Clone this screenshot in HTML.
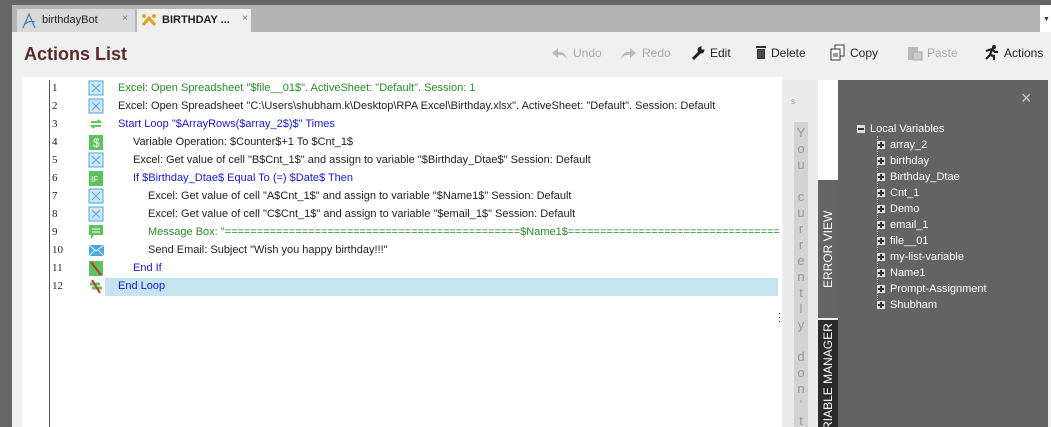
<!DOCTYPE html>
<html style="width:1051px;height:427px;overflow:hidden"><head><meta charset="utf-8"><style>
*{margin:0;padding:0;box-sizing:border-box}
body{width:1051px;height:427px;overflow:hidden;background:#666;font-family:"Liberation Sans",sans-serif;position:relative}
.abs{position:absolute}
.row{position:absolute;left:0;height:18px;font-size:11px;line-height:18px;width:780px}
.num{position:absolute;left:52px;font-family:"Liberation Serif",serif;font-size:11px;color:#222}
.ic{position:absolute;left:88px;top:1px;width:16px;height:16px}
.tx{position:absolute;white-space:nowrap;color:#222;letter-spacing:0}
.g{color:#2a8a2a}.b{color:#1a1acc}
.tb{position:absolute;top:46px;font-size:12px;color:#222;white-space:nowrap}
.tb.d{color:#aaa}
.tree{position:absolute;color:#fff;font-size:11px;white-space:nowrap}
.pl{display:inline-block;width:8px;height:8px;background:#ddd;margin-right:5px;vertical-align:-1px;position:relative}
.pl:after{content:"";position:absolute;left:1px;top:3px;width:6px;height:2px;background:#333}
.pl.p:before{content:"";position:absolute;left:3px;top:1px;width:2px;height:6px;background:#333}
</style></head><body>
<div class="abs" style="left:12px;top:5px;width:1039px;height:27px;background:#b4b4b4"></div>
<div class="abs" style="left:17px;top:9px;width:118px;height:23px;background:#d9d9d9"></div>
<svg class="abs" style="left:21px;top:12px" width="16" height="18"><path d="M2 16 L8 2 L14 16 M4 12 Q9 8 14 10" stroke="#4a7ab0" fill="none" stroke-width="1.2"/></svg>
<div class="abs" style="left:42px;top:14px;font-size:11px;color:#222">birthdayBot</div>
<div class="abs" style="left:122px;top:13px;font-size:10px;color:#777">×</div>
<div class="abs" style="left:137px;top:9px;width:114px;height:23px;background:#f0f0f0"></div>
<svg class="abs" style="left:141px;top:13px" width="16" height="14"><path d="M2 12 L8 5 L14 12" stroke="#e2a21c" stroke-width="3" fill="none"/><circle cx="3" cy="3" r="2" fill="#e2a21c"/><circle cx="13" cy="3" r="2" fill="#e2a21c"/></svg>
<div class="abs" style="left:162px;top:14px;font-size:11px;font-weight:bold;color:#222">BIRTHDAY ...</div>
<div class="abs" style="left:242px;top:13px;font-size:10px;color:#777">×</div>
<div class="abs" style="left:1040px;top:5px;width:11px;height:27px;background:#fff"></div>
<div class="abs" style="left:1043px;top:16px;font-size:7px;color:#333">▼</div>
<div class="abs" style="left:12px;top:32px;width:1039px;height:395px;background:#f0f0f0"></div>
<div class="abs" style="left:24px;top:44px;font-size:18px;font-weight:bold;color:#5b2b2b">Actions List</div>
<svg class="abs" style="left:551px;top:46px" width="17" height="14"><path d="M16 13 Q14 5 7 6 V2 L1 7 L7 12 V9 Q13 8 16 13Z" fill="#bbb"/></svg>
<div class="tb d" style="left:573px">Undo</div>
<svg class="abs" style="left:620px;top:46px" width="17" height="14"><path d="M1 13 Q3 5 10 6 V2 L16 7 L10 12 V9 Q4 8 1 13Z" fill="#bbb"/></svg>
<div class="tb d" style="left:642px">Redo</div>
<svg class="abs" style="left:690px;top:45px" width="16" height="16"><path d="M3 14 L10 7" stroke="#222" stroke-width="3"/><circle cx="11" cy="5" r="3.5" fill="#222"/><circle cx="13" cy="3" r="1.6" fill="#f0f0f0"/></svg>
<div class="tb" style="left:710px">Edit</div>
<svg class="abs" style="left:755px;top:45px" width="12" height="15"><rect x="1" y="1" width="10" height="2" fill="#333"/><rect x="2" y="4" width="8" height="10" fill="#333"/><path d="M4 5v8M6 5v8M8 5v8" stroke="#888" stroke-width=".6"/></svg>
<div class="tb" style="left:771px">Delete</div>
<svg class="abs" style="left:830px;top:44px" width="16" height="17"><rect x="5" y="1" width="9" height="11" fill="#fff" stroke="#333"/><rect x="1" y="5" width="9" height="11" fill="#fff" stroke="#333"/><path d="M3 10h5M3 12h5" stroke="#333"/></svg>
<div class="tb" style="left:850px">Copy</div>
<svg class="abs" style="left:907px;top:45px" width="16" height="16"><rect x="1" y="2" width="10" height="13" fill="#bbb"/><rect x="6" y="7" width="9" height="8" fill="#ccc" stroke="#aaa"/></svg>
<div class="tb d" style="left:927px">Paste</div>
<svg class="abs" style="left:983px;top:44px" width="16" height="17"><circle cx="11" cy="3" r="2" fill="#222"/><path d="M3 7 L9 5 L12 8 L15 8 M9 5 L7 11 L3 15 M7 11 L11 12 L11 16" stroke="#222" stroke-width="2.2" fill="none"/></svg>
<div class="tb" style="left:1004px">Actions</div>
<div class="abs" style="left:22px;top:77px;width:760px;height:350px;background:#fff"></div>
<div class="abs" style="left:49px;top:80px;width:1px;height:347px;background:#555"></div>
<div class="abs" style="left:105px;top:278px;width:673px;height:18px;background:#c6e4ed"></div>
<div class="row" style="top:79px"><span class="num">1</span><svg class="ic"><rect x="1" y="1" width="14" height="14" fill="#cfe8f7" stroke="#4aa7e0"/><path d="M4 4L12 12M12 4L4 12" stroke="#4aa7e0"/></svg><span class="tx g" style="left:118px">Excel: Open Spreadsheet "$file__01$". ActiveSheet: "Default". Session: 1</span></div>
<div class="row" style="top:97px"><span class="num">2</span><svg class="ic"><rect x="1" y="1" width="14" height="14" fill="#cfe8f7" stroke="#4aa7e0"/><path d="M4 4L12 12M12 4L4 12" stroke="#4aa7e0"/></svg><span class="tx" style="left:118px">Excel: Open Spreadsheet "C:\Users\shubham.k\Desktop\RPA Excel\Birthday.xlsx". ActiveSheet: "Default". Session: Default</span></div>
<div class="row" style="top:115px"><span class="num">3</span><svg class="ic"><path d="M3 6h9l-2-2M13 10H4l2 2" stroke="#5ec35e" stroke-width="2" fill="none"/></svg><span class="tx b" style="left:118px">Start Loop "$ArrayRows($array_2$)$" Times</span></div>
<div class="row" style="top:133px"><span class="num">4</span><svg class="ic"><rect x="1" y="1" width="14" height="15" fill="#5ec35e"/><text x="5" y="13" font-size="12" fill="#fff" font-family="Liberation Sans">$</text></svg><span class="tx" style="left:133px">Variable Operation: $Counter$+1 To $Cnt_1$</span></div>
<div class="row" style="top:151px"><span class="num">5</span><svg class="ic"><rect x="1" y="1" width="14" height="14" fill="#cfe8f7" stroke="#4aa7e0"/><path d="M4 4L12 12M12 4L4 12" stroke="#4aa7e0"/></svg><span class="tx" style="left:133px">Excel: Get value of cell "B$Cnt_1$" and assign to variable "$Birthday_Dtae$" Session: Default</span></div>
<div class="row" style="top:169px"><span class="num">6</span><svg class="ic"><rect x="1" y="1" width="14" height="15" fill="#5ec35e"/><text x="3" y="12" font-size="8" fill="#fff" font-family="Liberation Sans">IF</text></svg><span class="tx b" style="left:133px">If $Birthday_Dtae$ Equal To (=) $Date$ Then</span></div>
<div class="row" style="top:187px"><span class="num">7</span><svg class="ic"><rect x="1" y="1" width="14" height="14" fill="#cfe8f7" stroke="#4aa7e0"/><path d="M4 4L12 12M12 4L4 12" stroke="#4aa7e0"/></svg><span class="tx" style="left:148px">Excel: Get value of cell "A$Cnt_1$" and assign to variable "$Name1$" Session: Default</span></div>
<div class="row" style="top:205px"><span class="num">8</span><svg class="ic"><rect x="1" y="1" width="14" height="14" fill="#cfe8f7" stroke="#4aa7e0"/><path d="M4 4L12 12M12 4L4 12" stroke="#4aa7e0"/></svg><span class="tx" style="left:148px">Excel: Get value of cell "C$Cnt_1$" and assign to variable "$email_1$" Session: Default</span></div>
<div class="row" style="top:223px;overflow:hidden"><span class="num">9</span><svg class="ic"><path d="M1 1h14v10H6l-3 4v-4H1z" fill="#5ec35e"/><path d="M4 5h8M4 8h8" stroke="#fff"/></svg><span class="tx g" style="left:148px">Message Box: "==============================================$Name1$==============================================</span></div>
<div class="row" style="top:241px"><span class="num">10</span><svg class="ic"><rect x="1" y="3" width="15" height="11" fill="#4aa7e0"/><path d="M1 3L8 9L16 3M1 14L7 8M16 14L10 8" stroke="#dff" fill="none"/></svg><span class="tx" style="left:148px">Send Email: Subject "Wish you happy birthday!!!"</span></div>
<div class="row" style="top:259px"><span class="num">11</span><svg class="ic"><rect x="1" y="1" width="14" height="15" fill="#5ec35e"/><path d="M3 2L13 15" stroke="#c0392b" stroke-width="2"/></svg><span class="tx b" style="left:133px">End If</span></div>
<div class="row" style="top:277px"><span class="num">12</span><svg class="ic"><path d="M2 6h10M14 10H4" stroke="#5ec35e" stroke-width="3"/><path d="M4 2L12 15" stroke="#c0392b" stroke-width="2"/></svg><span class="tx b" style="left:118px">End Loop</span></div>
<div class="abs" style="left:778px;top:312px;font-size:10px;color:#222;line-height:4px">·<br>·<br>·</div>
<div class="abs" style="left:783px;top:80px;width:35px;height:347px;background:#ebebeb"></div>
<div class="abs" style="left:791px;top:97px;font-size:8px;color:#999">s</div>
<div class="abs" style="left:794px;top:122px;width:14px;height:305px;overflow:hidden;background:#d3d3d3;color:#999;font-size:13px;text-align:center;line-height:16px;padding-top:3px">Y<br>o<br>u<br>&nbsp;<br>c<br>u<br>r<br>r<br>e<br>n<br>t<br>l<br>y<br>&nbsp;<br>d<br>o<br>n<br>'<br>t</div>
<div class="abs" style="left:818px;top:80px;width:20px;height:100px;background:#fff"></div>
<div class="abs" style="left:818px;top:180px;width:20px;height:138px;background:#646464;overflow:hidden"><div class="abs" style="left:3px;top:108px;transform:rotate(-90deg);transform-origin:0 0;color:#fff;font-size:12px;white-space:nowrap">ERROR VIEW</div></div>
<div class="abs" style="left:818px;top:320px;width:20px;height:107px;background:#2b2b2b;overflow:hidden"><div class="abs" style="left:3px;top:125px;transform:rotate(-90deg);transform-origin:0 0;color:#fff;font-size:12px;white-space:nowrap">VARIABLE MANAGER</div></div>
<div class="abs" style="left:838px;top:80px;width:210px;height:347px;background:#636363"></div>
<div class="abs" style="left:1021px;top:88px;font-size:18px;color:#ccc">×</div>
<div class="abs" style="left:877px;top:136px;height:170px;border-left:1px dotted #ccc"></div>
<div class="tree" style="left:857px;top:123px"><span class="pl"></span>Local Variables</div>
<div class="tree" style="left:877px;top:139px"><span class="pl p"></span>array_2</div>
<div class="tree" style="left:877px;top:155px"><span class="pl p"></span>birthday</div>
<div class="tree" style="left:877px;top:171px"><span class="pl p"></span>Birthday_Dtae</div>
<div class="tree" style="left:877px;top:187px"><span class="pl p"></span>Cnt_1</div>
<div class="tree" style="left:877px;top:203px"><span class="pl p"></span>Demo</div>
<div class="tree" style="left:877px;top:219px"><span class="pl p"></span>email_1</div>
<div class="tree" style="left:877px;top:235px"><span class="pl p"></span>file__01</div>
<div class="tree" style="left:877px;top:251px"><span class="pl p"></span>my-list-variable</div>
<div class="tree" style="left:877px;top:267px"><span class="pl p"></span>Name1</div>
<div class="tree" style="left:877px;top:283px"><span class="pl p"></span>Prompt-Assignment</div>
<div class="tree" style="left:877px;top:299px"><span class="pl p"></span>Shubham</div>
</body></html>
